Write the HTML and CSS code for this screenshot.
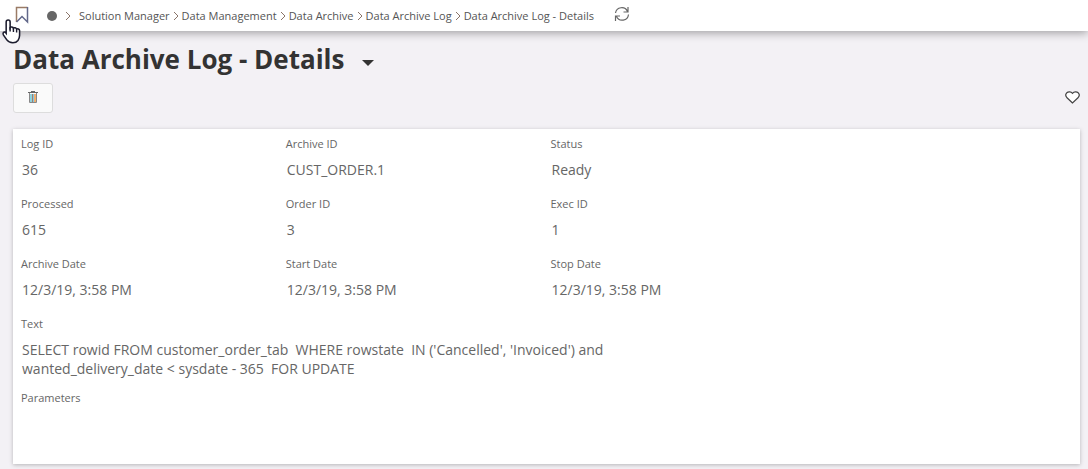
FILE: index.html
```html
<!DOCTYPE html>
<html lang="en">
<head>
  <meta charset="UTF-8">
  <meta name="viewport" content="width=device-width, initial-scale=1.0">
  <title>Data Archive Log - Details</title>
  <link rel="stylesheet" href="styles.css">
</head>
<body>

<header class="topbar">
  <button class="icon-button bookmark" type="button" aria-label="Bookmark">
    <svg width="14" height="18" viewBox="0 0 14 18"><path d="M1.500 16V1.500h11" fill="none" stroke="#9a7b66" stroke-width="1.500"/><path d="M12.500 1v15l-5.500-5.500-5.500 5.500" fill="none" stroke="#62688a" stroke-width="1.500"/></svg>
  </button>
  <span class="dot"></span>
  <nav class="breadcrumb" aria-label="Breadcrumb">
    <svg class="chevron first" width="6" height="8" viewBox="0 0 6 8"><path d="M1 0l4 4-4 4"/></svg>
    <a href="#">Solution Manager</a>
    <svg class="chevron" width="6" height="8" viewBox="0 0 6 8"><path d="M1 0l4 4-4 4"/></svg>
    <a href="#">Data Management</a>
    <svg class="chevron" width="6" height="8" viewBox="0 0 6 8"><path d="M1 0l4 4-4 4"/></svg>
    <a href="#">Data Archive</a>
    <svg class="chevron" width="6" height="8" viewBox="0 0 6 8"><path d="M1 0l4 4-4 4"/></svg>
    <a href="#">Data Archive Log</a>
    <svg class="chevron" width="6" height="8" viewBox="0 0 6 8"><path d="M1 0l4 4-4 4"/></svg>
    <a href="#">Data Archive Log - Details</a>
  </nav>
  <button class="icon-button refresh" type="button" aria-label="Refresh">
    <svg width="16" height="16" viewBox="0 0 16 16" fill="none" stroke="#666" stroke-width="1.200"><path d="M1.500 7A6.300 6.300 0 0 1 13.500 5.500M14 1v5H9.500M14.500 8.500A6.300 6.300 0 0 1 2.500 10.500M1.500 15V10H6"/></svg>
  </button>
</header>

<!-- Mouse pointer over the bookmark -->
<svg class="pointer" width="22" height="28" viewBox="0 0 20 25"><path d="M6.500 1.500c1.200 0 1.800.8 1.800 1.800v5.200c.5-.9 2.700-.8 3 .6.600-.8 2.600-.5 2.900.8.800-.6 2.500-.2 2.700 1.300v4.500c0 2-.8 3.300-1.500 4.500-1.200 1.600-2.300 2-4.600 2-2.700 0-4.200-.5-5.500-2.500L2.300 15.300c-.7-1.200-.5-2.200.3-2.600.8-.4 1.500.1 2.100.9V3.300c0-1 .6-1.800 1.800-1.800z" fill="#fff" stroke="#1c1c2e" stroke-width="1.400"/><path d="M8.300 8v4M11.300 9v3.500M14.200 10v3" stroke="#1c1c2e" stroke-width="1.300"/></svg>

<main class="page">
  <div class="title-row">
    <h1>Data Archive Log - Details</h1>
    <button class="icon-button" type="button" aria-label="Switch page">
      <svg width="12" height="6" viewBox="0 0 12 6"><path d="M0 0h12l-6 6z" fill="#333"/></svg>
    </button>
  </div>

  <div class="toolbar">
    <button class="command" type="button" aria-label="Delete">
      <svg width="10" height="12" viewBox="0 0 10 12"><path d="M2 3h2v8H2z" fill="#8fd3dc"/><path d="M4 3h1v8H4z" fill="#a08070"/><path d="M5 3h1v8H5z" fill="#7fc8e8"/><path d="M6 3h2v8H6z" fill="#f0b070"/><path d="M3 .5h4M0 1.500h10" stroke="#666"/><path d="M1.500 2v9.500h7V2" fill="none" stroke="#888"/></svg>
    </button>
    <button class="icon-button favorite" type="button" aria-label="Add to favorites">
      <svg width="15" height="13" viewBox="0 0 15 13"><path d="M7.500 12L2 6.800C.5 5.200.6 3 1.800 1.800 3.300.4 6 .5 7.500 2.300 9 .5 11.700.4 13.200 1.800 14.400 3 14.500 5.200 13 6.800z" fill="#fff" stroke="#444" stroke-width="1.200"/></svg>
    </button>
  </div>

  <dl class="card">
    <div class="field"><dt>Log ID</dt><dd>36</dd></div>
    <div class="field"><dt>Archive ID</dt><dd>CUST_ORDER.1</dd></div>
    <div class="field"><dt>Status</dt><dd>Ready</dd></div>
    <div class="field first-column"><dt>Processed</dt><dd>615</dd></div>
    <div class="field"><dt>Order ID</dt><dd>3</dd></div>
    <div class="field"><dt>Exec ID</dt><dd>1</dd></div>
    <div class="field first-column"><dt>Archive Date</dt><dd>12/3/19, 3:58 PM</dd></div>
    <div class="field"><dt>Start Date</dt><dd>12/3/19, 3:58 PM</dd></div>
    <div class="field"><dt>Stop Date</dt><dd>12/3/19, 3:58 PM</dd></div>
    <div class="field wide"><dt>Text</dt><dd>SELECT rowid FROM customer_order_tab  WHERE rowstate  IN ('Cancelled', 'Invoiced') and
wanted_delivery_date &lt; sysdate - 365  FOR UPDATE</dd></div>
    <div class="field wide"><dt>Parameters</dt><dd></dd></div>
  </dl>
</main>

</body>
</html>
```

FILE: styles.css
```css
* {
  box-sizing: border-box;
}
body {
  margin: 0;
  background-color: #f3f1f5;
  color: #666;
  font-family: "Open Sans", sans-serif;
  font-size: 11px;
}
svg {
  display: block;
}
.icon-button {
  padding: 0;
  border: 0;
  background: none;
  cursor: pointer;
}

/* Top bar */
.topbar {
  display: flex;
  align-items: center;
  height: 31px;
  padding-left: 15px;
  background-color: #fff;
  box-shadow: 0 2px 10px rgba(0, 0, 0, 0.35);
}
.bookmark {
  padding-bottom: 1px;
}
.dot {
  width: 10px;
  height: 10px;
  margin: 0 8px 0 18px;
  border-radius: 50%;
  background-color: #666;
}
.breadcrumb {
  display: flex;
  align-items: center;
  gap: 3px;
  line-height: 16px;
}
.breadcrumb a {
  color: #555;
  text-decoration: none;
}
.chevron {
  fill: none;
  stroke: #8a7468;
}
.chevron.first {
  margin-right: 5px;
}
.refresh {
  margin-left: 20px;
  padding-bottom: 3px;
}
.pointer {
  position: absolute;
  top: 18px;
  left: 1px;
}

/* Page header */
.page {
  padding: 10px 8px 6px 13px;
}
.title-row {
  display: flex;
  align-items: center;
  gap: 18px;
}
.title-row .icon-button {
  padding-top: 8px;
}
h1 {
  margin: 0;
  color: #333;
  font-size: 26px;
  line-height: 36px;
}
.toolbar {
  display: flex;
  align-items: center;
  justify-content: space-between;
  margin: 6px 0 16px;
}
.favorite {
  padding-bottom: 2px;
}
.command {
  display: flex;
  justify-content: center;
  width: 40px;
  height: 30px;
  padding: 7px;
  border: 1px solid #ddd;
  border-radius: 3px;
  background-color: #fafafa;
}

/* Details card */
.card {
  display: grid;
  grid-template-columns: repeat(4, 1fr);
  margin: 0;
  padding: 7px 0 0 8px;
  background-color: #fff;
  box-shadow: 0 1px 4px rgba(0, 0, 0, 0.25);
}
.field {
  min-height: 60px;
}
.first-column {
  grid-column-start: 1;
}
.wide {
  grid-column: 1 / -1;
  min-height: 74px;
}
dt {
  line-height: 16px;
}
dd {
  margin: 8px 0 0 1px;
  font-size: 14px;
  line-height: 19px;
  white-space: pre-wrap;
}
```
